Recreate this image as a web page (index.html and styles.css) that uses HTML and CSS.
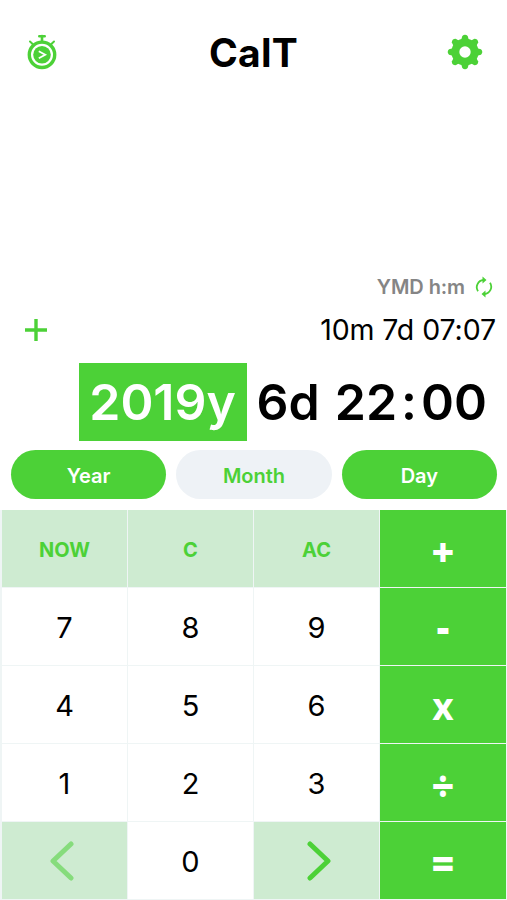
FILE: index.html
```html
<!DOCTYPE html>
<html lang="en">
<head>
<meta charset="utf-8">
<title>CalT</title>
<link rel="stylesheet" href="styles.css">
</head>
<body>
<main class="app">
  <header class="header">
    <svg class="timer" viewBox="0 0 30 36" fill="none" stroke="currentColor">
      <circle cx="15" cy="20.8" r="12.7" stroke-width="3.4"/>
      <circle cx="15" cy="20.8" r="8.8" fill="currentColor" stroke="none"/>
      <path d="M15 8V2M12.3 2.3h5.4" stroke-width="2.6" stroke-linecap="round"/>
      <path d="M3 7.5l2.6 2.4M27 7.5l-2.6 2.4" stroke-width="2" stroke-linecap="round"/>
      <path class="mark" d="M11.8 17.2l6.4 3.5-6.4 3.5" stroke-width="1.8"/>
    </svg>
    <h1 class="title">CalT</h1>
    <svg class="gear" viewBox="0 0 36 36">
      <g fill="currentColor">
        <path id="teeth" d="M14.2 6L15.3 2Q18 -.6 20.7 2L21.8 6V30L20.7 34Q18 36.6 15.3 34L14.2 30Z"/>
        <use href="#teeth" transform="rotate(45 18 18)"/>
        <use href="#teeth" transform="rotate(90 18 18)"/>
        <use href="#teeth" transform="rotate(135 18 18)"/>
        <circle cx="18" cy="18" r="13.6"/>
      </g>
      <circle cx="18" cy="18" r="5.7" fill="#fff"/>
    </svg>
  </header>
  <section class="display">
    <div class="format"><span>YMD h:m</span>
      <svg class="sync" viewBox="0 0 18 22" fill="none" stroke="currentColor" stroke-width="1.8">
        <path d="M3 15.3A7.3 7.3 0 0 1 8.5 4M15 6.7A7.3 7.3 0 0 1 9.5 18"/>
        <path d="M7.5 .6L11.5 4 7.5 7.4ZM10.5 14.6L6.5 18l4 3.4Z" fill="currentColor" stroke="none"/>
      </svg>
    </div>
    <div class="operand">
      <svg class="plus" viewBox="0 0 22 22" stroke="currentColor" stroke-width="3.4"><path d="M11 0v22M0 11h22"/></svg>
      <span class="previous">10m 7d 07:07</span>
    </div>
    <div class="current"><span class="selected">2019y</span><span class="days">6d</span><span class="time">22<span class="colon">:</span>00</span></div>
  </section>
  <nav class="units">
    <button class="unit on">Year</button>
    <button class="unit">Month</button>
    <button class="unit on">Day</button>
  </nav>
  <section class="keys">
    <button class="key soft">NOW</button><button class="key soft">C</button><button class="key soft">AC</button><button class="key op">+</button>
    <button class="key">7</button><button class="key">8</button><button class="key">9</button><button class="key op minus">-</button>
    <button class="key">4</button><button class="key">5</button><button class="key">6</button><button class="key op times">x</button>
    <button class="key">1</button><button class="key">2</button><button class="key">3</button><button class="key op">÷</button>
    <button class="key soft prev"><svg class="arrow dim" viewBox="0 0 24 40"><path d="M21 3L3 20l18 17"/></svg></button><button class="key">0</button><button class="key soft next"><svg class="arrow" viewBox="0 0 24 40"><path d="M3 3l18 17L3 37"/></svg></button><button class="key op">=</button>
  </section>
</main>
</body>
</html>
```

FILE: styles.css
```css
* { box-sizing: border-box; }
body { margin: 0; background: #fff; font-family: Inter, "Liberation Sans", sans-serif; }
button { border: 0; padding: 0; margin: 0; font-family: inherit; }
svg { display: block; flex: none; }
.app { width: 507px; height: 900px; display: flex; flex-direction: column; overflow: hidden; color: #000; }
.header { height: 104px; flex: none; display: flex; align-items: center; justify-content: space-between; padding: 0 24px 0 27px; color: #4cd137; }
.timer { width: 30px; height: 36px; }
.mark { stroke: #fff; }
.gear { width: 36px; height: 36px; }
.title { margin: 2px 0 0 3px; color: #000; font-size: 39px; font-weight: 700; letter-spacing: 0.2px; line-height: 48px; }
.display { height: 346px; flex: none; padding-top: 170px; }
.format { height: 26px; display: flex; align-items: center; justify-content: flex-end; gap: 10px; padding-right: 14px; color: #858585; font-size: 20px; font-weight: 600; line-height: 26px; }
.format span { letter-spacing: -0.1px; }
.sync { width: 18px; height: 22px; color: #4cd137; }
.operand { height: 59px; display: flex; align-items: center; justify-content: space-between; padding: 0 11px 0 25px; }
.plus { width: 22px; height: 22px; color: #4cd137; }
.previous { font-size: 28.5px; letter-spacing: -0.1px; }
.current { height: 78px; margin-top: 4px; display: flex; align-items: center; justify-content: flex-end; padding-right: 20px; font-size: 50px; font-weight: 600; line-height: 78px; white-space: nowrap; }
.selected { width: 168px; height: 78px; background: #4cd137; color: #fff; text-align: center; }
.days { margin-left: 10px; }
.time { margin-left: 15px; }
.colon { margin: 0 4px; }
.units { height: 60px; flex: none; display: grid; grid-template-columns: repeat(3, 1fr); gap: 10px; padding: 0 10px 11px 11px; }
.unit { height: 49px; padding-top: 2px; border-radius: 25px; background: #eef2f6; color: #4cd137; font-size: 20px; font-weight: 600; }
.on { background: #4cd137; color: #fff; }
.keys { flex: 1; display: grid; grid-template-columns: repeat(3, 125px) 1fr; grid-template-rows: repeat(5, 1fr); gap: 1px; padding: 0 1px 1px 2px; background: #eff5f5; }
.key { display: flex; align-items: center; justify-content: center; background: #fff; color: #000; font-size: 29px; font-weight: 400; padding-top: 1px; }
.soft { background: #ceebd1; color: #4cd137; font-size: 20px; font-weight: 700; padding-top: 2px; }
.prev { padding: 0 5px 0 0; }
.next { padding: 0 0 0 5px; }
.op { background: #4cd137; color: #fff; font-family: "Open Sans", sans-serif; font-size: 39px; font-weight: 800; line-height: 40px; padding: 4px 0 0 0; }
.minus { padding-top: 0; }
.times { font-size: 37px; font-weight: 700; padding-top: 2px; }
.arrow { width: 24px; height: 40px; fill: none; stroke: #4cd137; stroke-width: 5; stroke-linecap: round; stroke-linejoin: round; }
.dim { opacity: .55; }
```
